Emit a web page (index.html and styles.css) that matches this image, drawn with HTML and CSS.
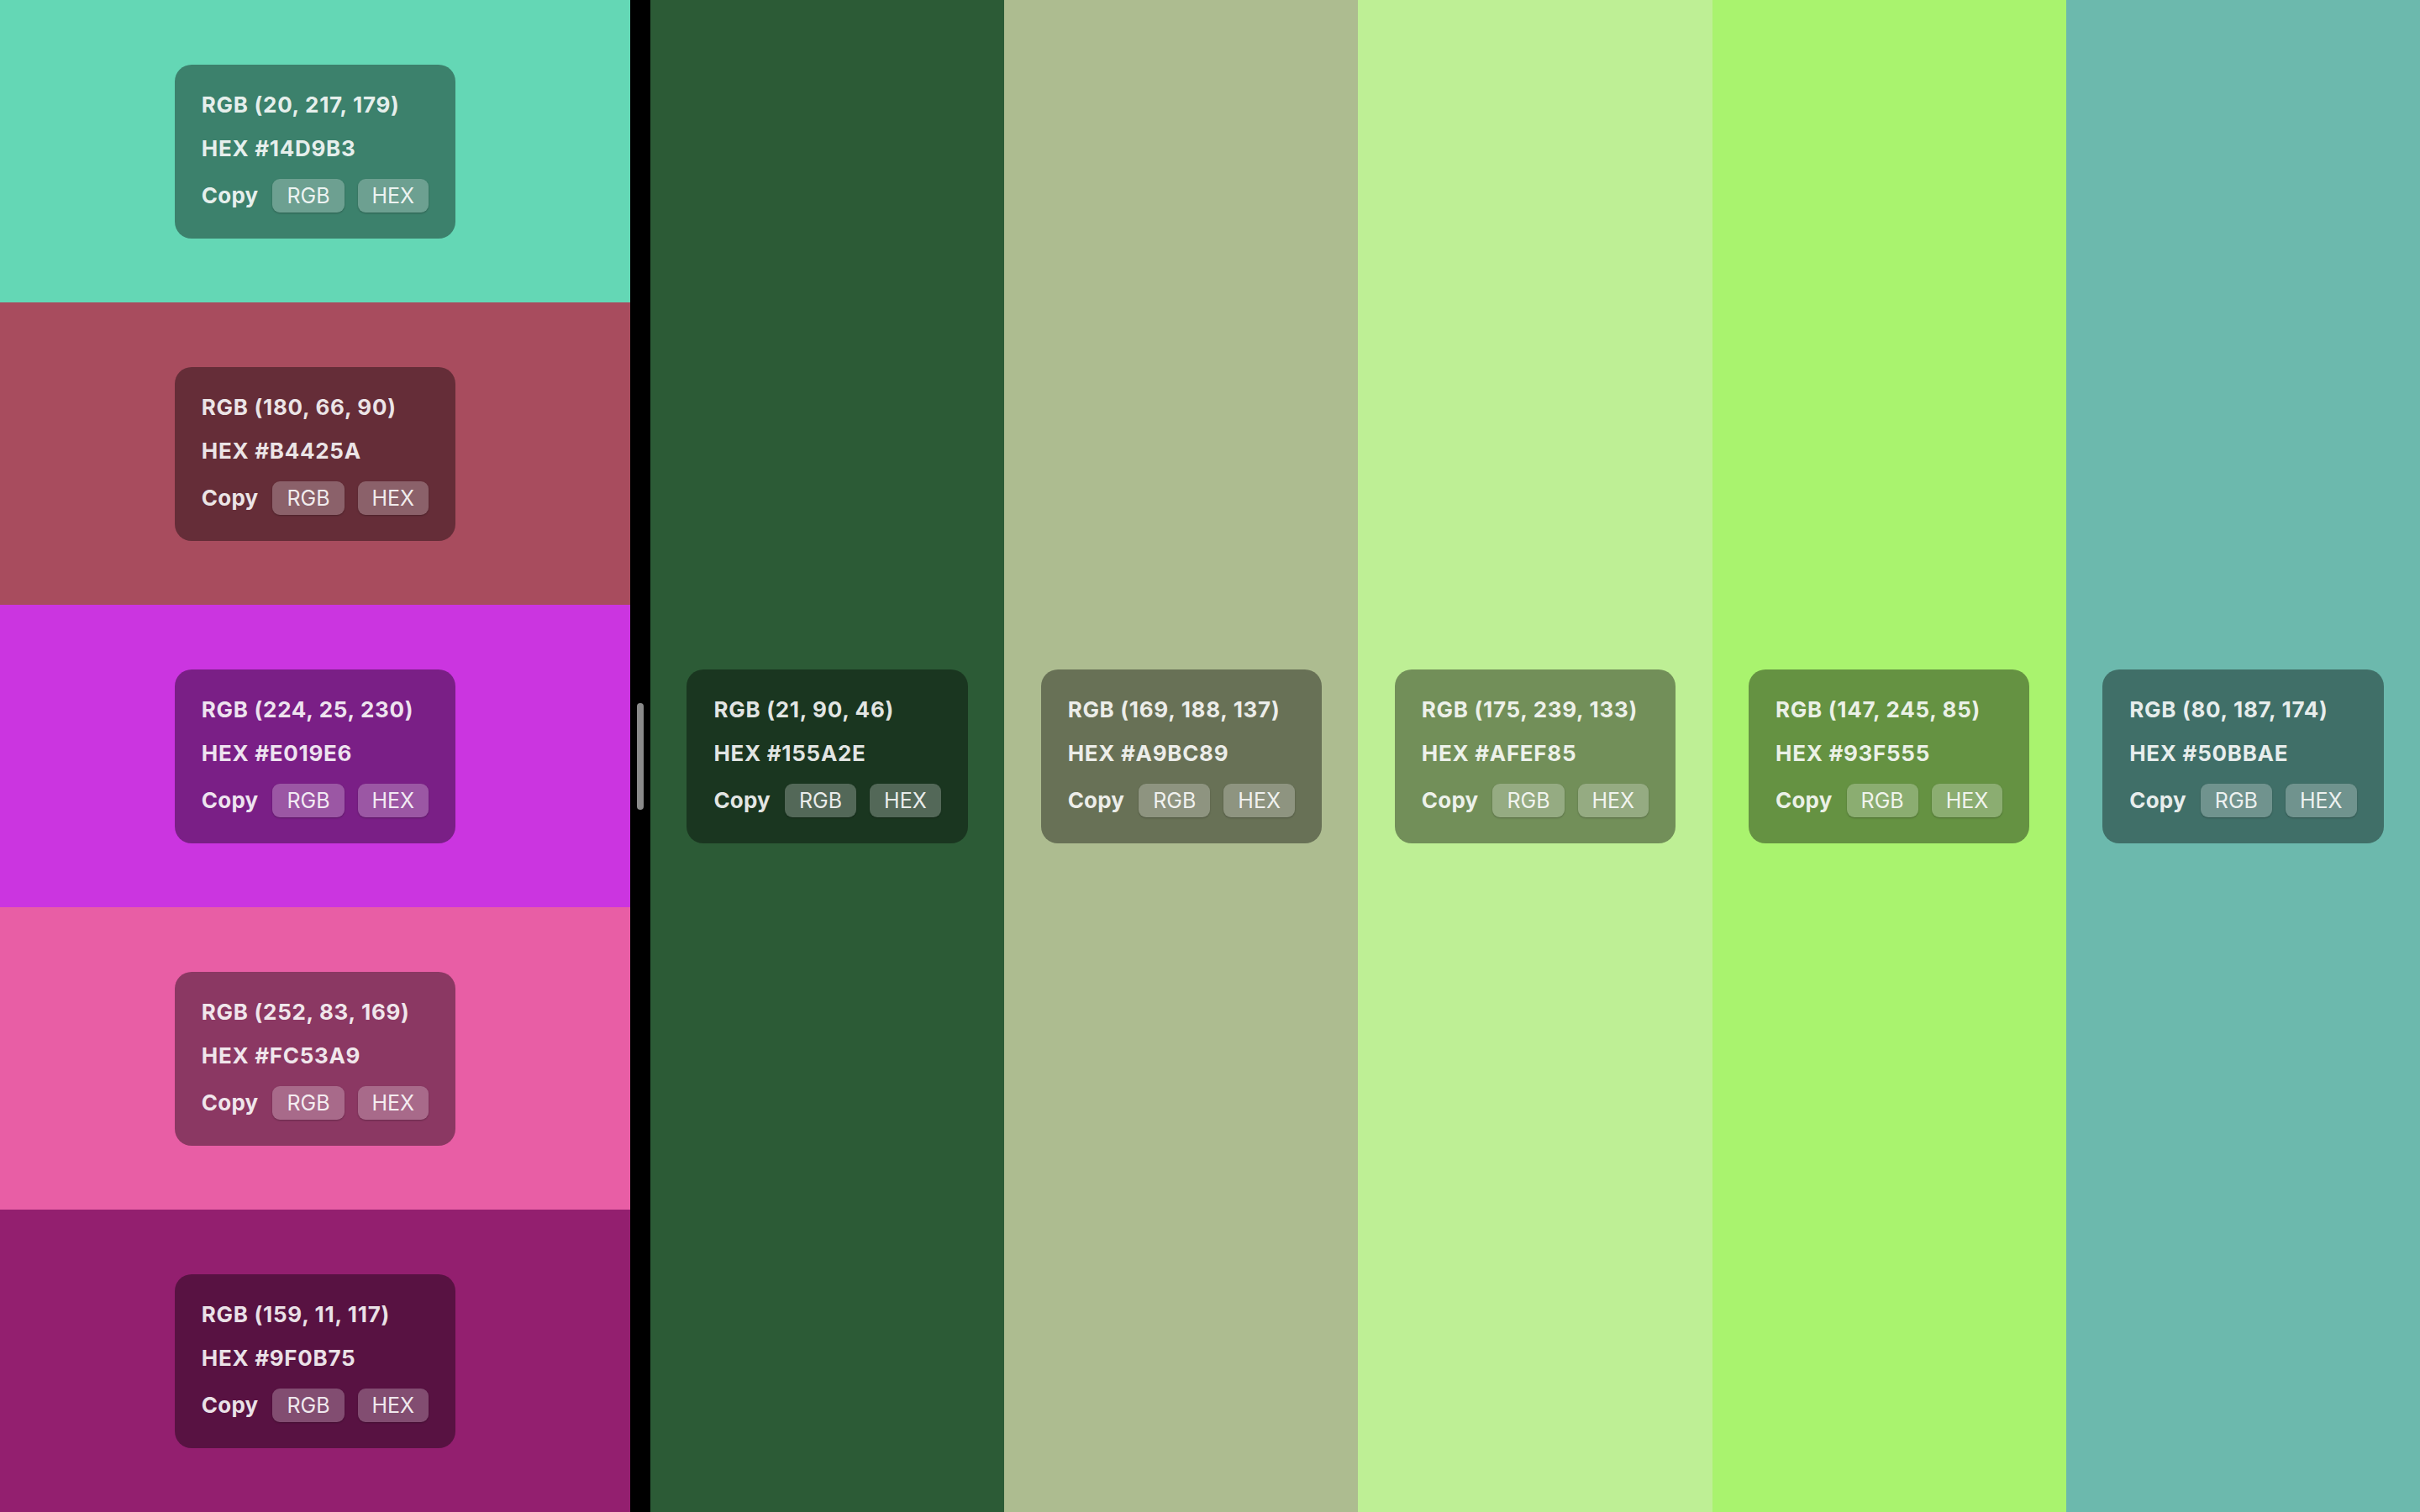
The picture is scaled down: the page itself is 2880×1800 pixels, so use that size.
FILE: index.html
```html
<!DOCTYPE html>
<html>
<head>
<meta charset="utf-8">
<link rel="stylesheet" href="styles.css">
</head>
<body>
<div class="app">
  <div class="stack">
    <div class="swatch c-14d9b3"><div class="card"><div class="line">RGB (20, 217, 179)</div><div class="line">HEX #14D9B3</div><div class="copy"><span>Copy</span><button class="btn">RGB</button><button class="btn">HEX</button></div></div></div>
    <div class="swatch c-b4425a"><div class="card"><div class="line">RGB (180, 66, 90)</div><div class="line">HEX #B4425A</div><div class="copy"><span>Copy</span><button class="btn">RGB</button><button class="btn">HEX</button></div></div></div>
    <div class="swatch c-e019e6"><div class="card"><div class="line">RGB (224, 25, 230)</div><div class="line">HEX #E019E6</div><div class="copy"><span>Copy</span><button class="btn">RGB</button><button class="btn">HEX</button></div></div></div>
    <div class="swatch c-fc53a9"><div class="card"><div class="line">RGB (252, 83, 169)</div><div class="line">HEX #FC53A9</div><div class="copy"><span>Copy</span><button class="btn">RGB</button><button class="btn">HEX</button></div></div></div>
    <div class="swatch c-9f0b75"><div class="card"><div class="line">RGB (159, 11, 117)</div><div class="line">HEX #9F0B75</div><div class="copy"><span>Copy</span><button class="btn">RGB</button><button class="btn">HEX</button></div></div></div>
  </div>
  <div class="divider"><div class="handle"></div></div>
  <div class="columns">
    <div class="swatch c-155a2e"><div class="card"><div class="line">RGB (21, 90, 46)</div><div class="line">HEX #155A2E</div><div class="copy"><span>Copy</span><button class="btn">RGB</button><button class="btn">HEX</button></div></div></div>
    <div class="swatch c-a9bc89"><div class="card"><div class="line">RGB (169, 188, 137)</div><div class="line">HEX #A9BC89</div><div class="copy"><span>Copy</span><button class="btn">RGB</button><button class="btn">HEX</button></div></div></div>
    <div class="swatch c-afef85"><div class="card"><div class="line">RGB (175, 239, 133)</div><div class="line">HEX #AFEF85</div><div class="copy"><span>Copy</span><button class="btn">RGB</button><button class="btn">HEX</button></div></div></div>
    <div class="swatch c-93f555"><div class="card"><div class="line">RGB (147, 245, 85)</div><div class="line">HEX #93F555</div><div class="copy"><span>Copy</span><button class="btn">RGB</button><button class="btn">HEX</button></div></div></div>
    <div class="swatch c-50bbae"><div class="card"><div class="line">RGB (80, 187, 174)</div><div class="line">HEX #50BBAE</div><div class="copy"><span>Copy</span><button class="btn">RGB</button><button class="btn">HEX</button></div></div></div>
  </div>
</div>
</body>
</html>
```
FILE: styles.css
```css
* { box-sizing: border-box; }
html, body { margin: 0; padding: 0; }
body {
  width: 2880px;
  height: 1800px;
  overflow: hidden;
  font-family: Inter, "Noto Sans", sans-serif;
  background: #000;
}
.app {
  display: flex;
  width: 2880px;
  height: 1800px;
}
.stack {
  width: 750px;
  display: flex;
  flex-direction: column;
}
.stack .swatch { flex: 1 1 0; }
.divider {
  width: 24px;
  background: #000;
  display: flex;
  align-items: center;
  justify-content: center;
}
.handle {
  width: 8px;
  height: 127px;
  border-radius: 4px;
  background: #8a8a8a;
}
.columns {
  flex: 1;
  display: flex;
}
.columns .swatch { flex: 1 1 0; }
.swatch {
  display: flex;
  align-items: center;
  justify-content: center;
}
.card {
  background: rgba(0, 0, 0, 0.4);
  border-radius: 20px;
  padding: 32px 32px 31px;
  display: flex;
  flex-direction: column;
  gap: 20px;
  color: rgba(255, 255, 255, 0.88);
}
.line {
  font-size: 26px;
  font-weight: 700;
  line-height: 32px;
  letter-spacing: 0.7px;
  white-space: nowrap;
}
.copy {
  display: flex;
  align-items: center;
  height: 40px;
  gap: 16px;
  font-size: 26px;
  font-weight: 700;
  letter-spacing: 0.2px;
}
.copy span { margin-right: 1px; }
.btn {
  font-family: inherit;
  font-size: 25px;
  font-weight: 400;
  letter-spacing: 0;
  color: rgba(255, 255, 255, 0.9);
  height: 40px;
  padding: 0 17px;
  border: none;
  border-radius: 9px;
  background: rgba(255, 255, 255, 0.25);
  box-shadow: 0 1px 2px rgba(0, 0, 0, 0.25);
  line-height: 40px;
}
.c-14d9b3 { background: #64d7b5; }
.c-b4425a { background: #a84c5e; }
.c-e019e6 { background: #cb35e0; }
.c-fc53a9 { background: #e85ea5; }
.c-9f0b75 { background: #931f6f; }
.c-155a2e { background: #2c5b36; }
.c-a9bc89 { background: #adbc90; }
.c-afef85 { background: #beef95; }
.c-93f555 { background: #a9f36e; }
.c-50bbae { background: #6cb9ad; }
```
